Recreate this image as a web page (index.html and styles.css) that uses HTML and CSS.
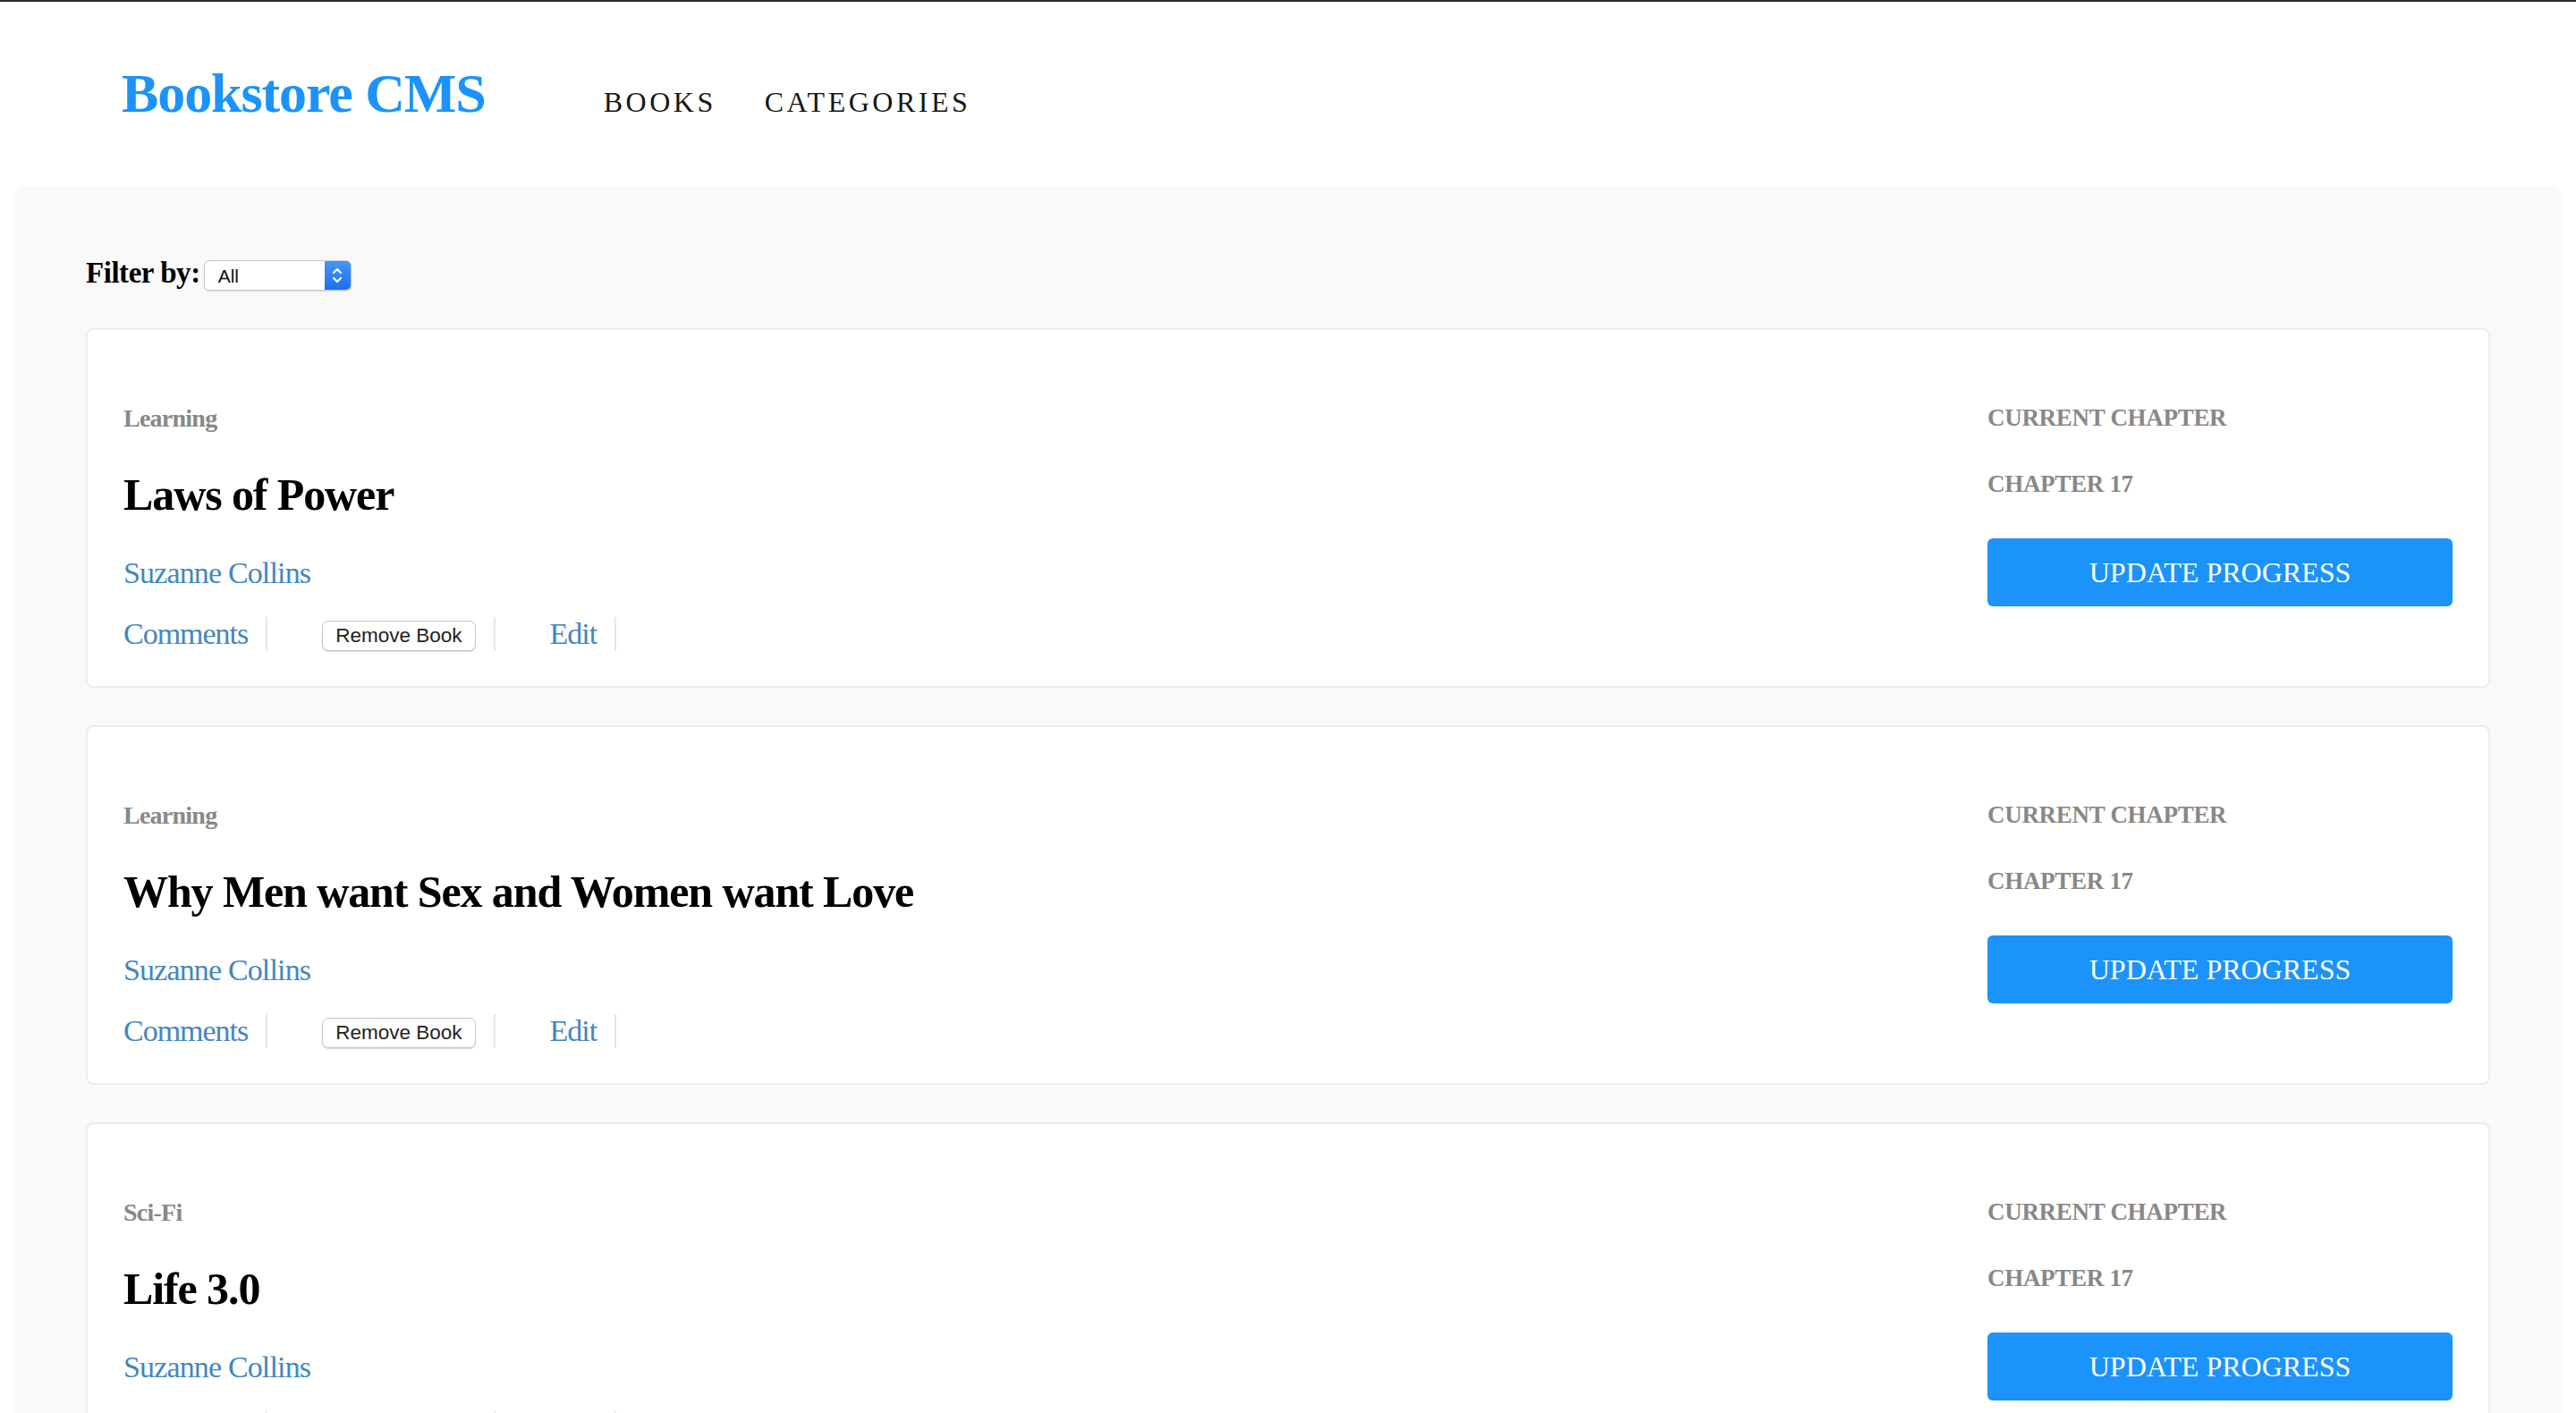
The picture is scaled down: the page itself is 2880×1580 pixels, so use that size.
FILE: index.html
```html
<!DOCTYPE html>
<html lang="en">
<head>
<meta charset="utf-8">
<title>Bookstore CMS</title>
<link rel="stylesheet" href="styles.css">
</head>
<body>
<div class="topbar"></div>
<header class="header">
  <h1 class="logo">Bookstore CMS</h1>
  <nav class="nav">
    <a class="nav-link" href="#">BOOKS</a>
    <a class="nav-link" href="#">CATEGORIES</a>
  </nav>
</header>
<main class="panel">
  <div class="filter">
    <span class="filter-label">Filter by:</span>
    <div class="select">
      <span class="select-value">All</span>
      <span class="select-arrow">
        <svg width="14" height="22" viewBox="0 0 14 22" fill="none" stroke="#fff" stroke-width="2.2" stroke-linecap="round" stroke-linejoin="round"><path d="M3 8 L7 4 L11 8"/><path d="M3 14 L7 18 L11 14"/></svg>
      </span>
    </div>
  </div>

  <section class="card">
    <div class="book-info">
      <div class="category">Learning</div>
      <h2 class="title">Laws of Power</h2>
      <div class="author">Suzanne Collins</div>
      <ul class="actions">
        <li class="action"><a class="action-link" href="#">Comments</a></li>
        <li class="action action-wide"><button class="remove-btn" type="button">Remove Book</button></li>
        <li class="action action-wide"><a class="action-link" href="#">Edit</a></li>
      </ul>
    </div>
    <div class="progress">
      <div class="progress-label">CURRENT CHAPTER</div>
      <div class="progress-chapter">CHAPTER 17</div>
      <button class="update-btn" type="button">UPDATE PROGRESS</button>
    </div>
  </section>

  <section class="card">
    <div class="book-info">
      <div class="category">Learning</div>
      <h2 class="title">Why Men want Sex and Women want Love</h2>
      <div class="author">Suzanne Collins</div>
      <ul class="actions">
        <li class="action"><a class="action-link" href="#">Comments</a></li>
        <li class="action action-wide"><button class="remove-btn" type="button">Remove Book</button></li>
        <li class="action action-wide"><a class="action-link" href="#">Edit</a></li>
      </ul>
    </div>
    <div class="progress">
      <div class="progress-label">CURRENT CHAPTER</div>
      <div class="progress-chapter">CHAPTER 17</div>
      <button class="update-btn" type="button">UPDATE PROGRESS</button>
    </div>
  </section>

  <section class="card">
    <div class="book-info">
      <div class="category">Sci-Fi</div>
      <h2 class="title">Life 3.0</h2>
      <div class="author">Suzanne Collins</div>
      <ul class="actions">
        <li class="action"><a class="action-link" href="#">Comments</a></li>
        <li class="action action-wide"><button class="remove-btn" type="button">Remove Book</button></li>
        <li class="action action-wide"><a class="action-link" href="#">Edit</a></li>
      </ul>
    </div>
    <div class="progress">
      <div class="progress-label">CURRENT CHAPTER</div>
      <div class="progress-chapter">CHAPTER 17</div>
      <button class="update-btn" type="button">UPDATE PROGRESS</button>
    </div>
  </section>
</main>
</body>
</html>
```

FILE: styles.css
```css
* {
  box-sizing: border-box;
}

body {
  margin: 0;
  background: #fff;
  font-family: "Liberation Serif", "Times New Roman", serif;
  color: #000;
}

.topbar {
  height: 2px;
  background: #2b2b2b;
}

.header {
  height: 206px;
  display: flex;
  align-items: baseline;
  padding: 71px 0 0 136px;
}

.logo {
  margin: 0;
  font-size: 62px;
  line-height: 1;
  font-weight: 700;
  letter-spacing: -0.0175em;
  color: #1b93fb;
}

.nav {
  display: flex;
  gap: 54px;
  margin-left: 132px;
}

.nav-link {
  font-size: 32px;
  line-height: 1;
  letter-spacing: 3.5px;
  color: #161616;
  text-decoration: none;
}

.panel {
  margin: 0 16px;
  min-height: 1500px;
  padding: 81px 80px 40px;
  background: #f9f9f9;
  border-radius: 10px;
}

.filter {
  display: flex;
  align-items: baseline;
  gap: 4px;
  margin-bottom: 42px;
}

.filter-label {
  font-size: 33px;
  line-height: 1;
  font-weight: 700;
  letter-spacing: -0.014em;
}

.select {
  width: 165px;
  height: 34px;
  display: flex;
  background: #fff;
  border: 1px solid #c9c9c9;
  border-radius: 6px;
  overflow: hidden;
  box-shadow: 0 1px 2px rgba(0, 0, 0, 0.12);
}

.select-value {
  flex: 1;
  padding: 6px 0 0 15px;
  font-family: "Liberation Sans", Arial, sans-serif;
  font-size: 21px;
  line-height: 1;
  color: #111;
}

.select-arrow {
  width: 29px;
  display: flex;
  align-items: center;
  justify-content: center;
  background: linear-gradient(#4796f8, #1c70f0);
}

.card {
  display: flex;
  justify-content: space-between;
  align-items: flex-start;
  margin-bottom: 42px;
  padding: 85px 40px 39px;
  background: #fff;
  border: 2px solid #ececec;
  border-radius: 8px;
}

.book-info {
  display: flex;
  flex-direction: column;
  align-items: flex-start;
}

.category {
  font-size: 28px;
  line-height: 1;
  font-weight: 700;
  letter-spacing: -0.027em;
  color: #888;
}

.title {
  margin: 46px 0 0;
  font-size: 50px;
  line-height: 1;
  font-weight: 700;
  letter-spacing: -0.022em;
}

.author {
  margin-top: 46px;
  font-size: 34px;
  line-height: 1;
  letter-spacing: -0.025em;
  color: #4386bf;
}

.actions {
  display: flex;
  margin: 32px 0 0;
  padding: 0;
  list-style: none;
}

.action {
  display: flex;
  align-items: center;
  height: 38px;
  padding-right: 20px;
  border-right: 2px solid #e8e8e8;
}

.action-wide {
  margin-left: 61px;
}

.action-link {
  font-size: 34px;
  line-height: 38px;
  letter-spacing: -0.03em;
  color: #4386bf;
  text-decoration: none;
}

.remove-btn {
  margin-top: 4px;
  height: 34px;
  padding: 0 14px;
  font-family: "Liberation Sans", Arial, sans-serif;
  font-size: 22.5px;
  line-height: 1;
  color: #222;
  background: #fff;
  border: 1px solid #c6c6c6;
  border-radius: 7px;
  box-shadow: 0 1px 1px rgba(0, 0, 0, 0.15);
}

.progress {
  width: 520px;
  display: flex;
  flex-direction: column;
  align-items: flex-start;
}

.progress-label,
.progress-chapter {
  font-size: 27px;
  line-height: 1;
  font-weight: 700;
  letter-spacing: -0.011em;
  color: #888;
}

.progress-chapter {
  margin-top: 47px;
}

.update-btn {
  width: 520px;
  height: 76px;
  margin-top: 47px;
  font-family: "Liberation Serif", "Times New Roman", serif;
  font-size: 32px;
  line-height: 1;
  letter-spacing: 0;
  color: #fff;
  background: #1b93fb;
  border: none;
  border-radius: 6px;
}
```
